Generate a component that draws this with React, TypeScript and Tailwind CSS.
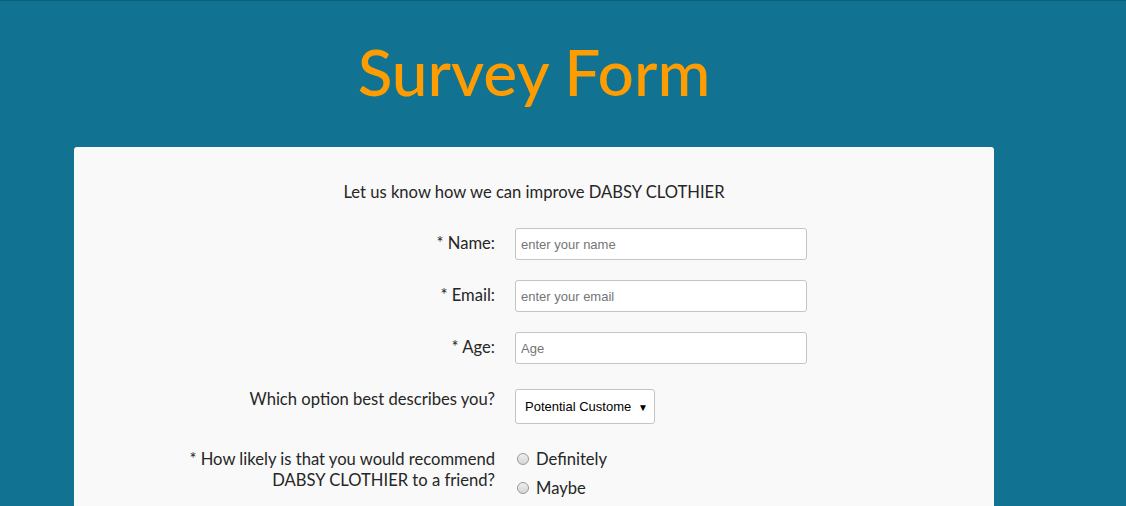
import React from 'react';

const font = { fontFamily: 'Lato, "Open Sans", sans-serif' };

const Row = ({ label, children, labelPad = 'pt-[2px]' }: { label: React.ReactNode; children: React.ReactNode; labelPad?: string }) => (
  <div className="flex items-start">
    <div className={`w-[421px] shrink-0 text-right text-[16.6px] leading-[20px] text-[#262626] ${labelPad}`}>{label}</div>
    <div className="ml-[20px]">{children}</div>
  </div>
);

const inputCls =
  "w-[292px] h-[32px] rounded-[3px] border border-[#c4c4c4] bg-white px-[5px] text-[13px] text-[#333] placeholder:text-[#757575] outline-none";

export default function App() {
  return (
    <div className="min-h-screen bg-[#117391] border-t border-[#0d5f78]" style={font}>
      <div className="w-[920px] ml-[74px]">
        <h1 className="h-[146px] pt-[33px] text-center text-[64px] leading-[76px] font-medium text-[#ff9c00]">Survey Form</h1>
        <div className="bg-[#f9f9f9] rounded-[3px] pt-[33px] pb-[40px]">
          <p className="text-center text-[16.6px] leading-[24px] text-[#262626]">Let us know how we can improve DABSY CLOTHIER</p>
          <div className="mt-[24px] flex flex-col gap-[20px]" style={{ fontFamily: 'Arial, "Liberation Sans", sans-serif' }}>
            <Row label={<span style={font}>* Name:</span>} labelPad="pt-[5px]">
              <input className={inputCls} placeholder="enter your name" />
            </Row>
            <Row label={<span style={font}>* Email:</span>} labelPad="pt-[5px]">
              <input className={inputCls} placeholder="enter your email" />
            </Row>
            <Row label={<span style={font}>* Age:</span>} labelPad="pt-[5px]">
              <input className={inputCls} placeholder="Age" />
            </Row>
            <div className="mt-[5px]">
              <Row label={<span style={font}>Which option best describes you?</span>} labelPad="pt-0">
                <div className="relative w-[140px] h-[35px] rounded-[3px] border border-[#c4c4c4] bg-white flex items-center pl-[9px] text-[13px] text-black">
                  <span className="whitespace-nowrap">Potential Custome</span>
                  <span className="absolute right-[6px] top-[10px] text-[10px]">▼</span>
                </div>
              </Row>
            </div>
            <div className="mt-[5px]">
              <Row label={<span style={font}>* How likely is that you would recommend<br />DABSY CLOTHIER to a friend?</span>} labelPad="pt-0">
                <div className="ml-[2px] flex flex-col gap-[9px] text-[16.6px] text-[#262626]" style={font}>
                  <label className="flex items-center gap-[7px] h-[20px]">
                    <span className="w-[12px] h-[12px] rounded-full border border-[#999] bg-gradient-to-b from-[#eee] to-[#d6d6d6]" />
                    Definitely
                  </label>
                  <label className="flex items-center gap-[7px] h-[20px]">
                    <span className="w-[12px] h-[12px] rounded-full border border-[#999] bg-gradient-to-b from-[#eee] to-[#d6d6d6]" />
                    Maybe
                  </label>
                </div>
              </Row>
            </div>
          </div>
        </div>
      </div>
    </div>
  );
}
